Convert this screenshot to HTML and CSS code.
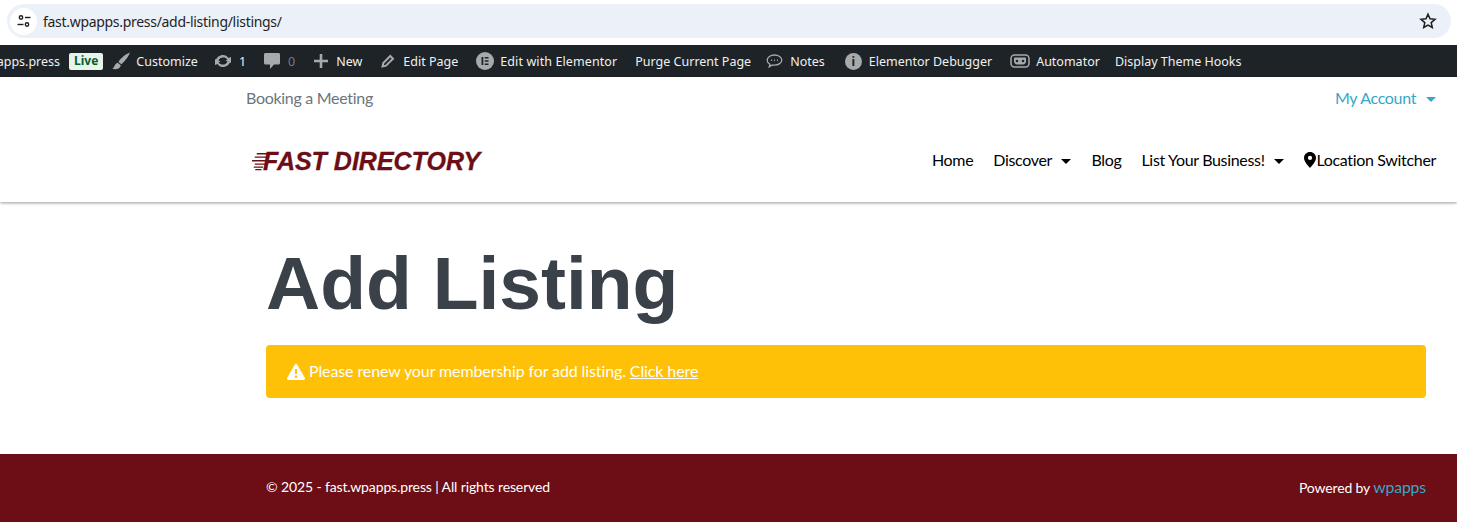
FILE: index.html
```html
<!DOCTYPE html>
<html lang="en">
<head>
  <meta charset="UTF-8">
  <meta name="viewport" content="width=device-width, initial-scale=1.0">
  <title>Add Listing</title>
  <link rel="stylesheet" href="styles.css">
</head>
<body>
  <div class="browser-bar">
    <div class="omnibox">
      <span class="site-icon">
        <svg width="16" height="16" viewBox="0 0 16 16" fill="none" stroke="#1f1f1f" stroke-width="1.4">
          <circle cx="5" cy="4.500" r="1.700"/><path d="M9 4.500h5.500"/>
          <circle cx="11" cy="11.500" r="1.700"/><path d="M1.500 11.500h6"/>
        </svg>
      </span>
      <span class="url">fast.wpapps.press/add-listing/listings/</span>
      <svg class="star" width="18" height="18" viewBox="0 0 18 18" fill="none" stroke="#1f1f1f" stroke-width="1.500">
        <path d="M9 2.200l2 4.600 5 .5-3.800 3.300 1.100 4.900L9 13l-4.300 2.500 1.100-4.900L2 7.300l5-.5z"/>
      </svg>
    </div>
  </div>

  <div class="admin-bar">
    <span class="admin-item site-name">fast.wpapps.press</span>
    <span class="live">Live</span>
    <span class="admin-item customize">
      <svg width="18" height="18" viewBox="0 0 18 18" fill="#a7aaad"><path d="M18 .5C14 2 8.500 6 6.500 10l2.800 2.200C12.500 10 16.500 4.500 18 .5zM5.700 10.800C2.500 11.500 3 15 .3 16.800c3.700 1.200 8 .2 8.500-3.500z"/></svg>
      Customize
    </span>
    <span class="admin-item updates">
      <svg width="18" height="18" viewBox="0 0 18 18" fill="#a7aaad"><path d="M9 3c2.300 0 4.300 1.200 5.400 3.100L17 5v6l-5.500-2.500 1.900-1C12.600 6 10.900 5.400 9 5.400c-2 0-3.800 1.200-4.500 3.100H1.900C2.700 5.300 5.500 3 9 3zM9 15c-2.300 0-4.300-1.200-5.400-3.100L1 13V7l5.500 2.500-1.900 1c.8 1.500 2.500 2.100 4.400 2.100 2 0 3.800-1.200 4.500-3.100h2.600C15.300 12.700 12.500 15 9 15z"/></svg>
      1
    </span>
    <span class="admin-item comments">
      <svg width="16" height="16" viewBox="0 0 16 16" fill="#a7aaad"><path d="M1.500 0h13c.8 0 1.500.7 1.500 1.500v8.500c0 .8-.7 1.500-1.500 1.500H10L6 16v-4.500H1.500C.7 11.500 0 10.800 0 10V1.500C0 .7.700 0 1.500 0z"/></svg>
      <span class="zero">0</span>
    </span>
    <span class="admin-item new-item">
      <svg width="14" height="14" viewBox="0 0 14 14" fill="#a7aaad"><path d="M5.700 0h2.600v5.700H14v2.600H8.300V14H5.700V8.300H0V5.700h5.700z"/></svg>
      New
    </span>
    <span class="admin-item edit-page">
      <svg width="16" height="16" viewBox="0 0 16 16" fill="none" stroke="#a7aaad" stroke-width="2"><path d="M2.500 13.500l.8-3.500 7-7 2.700 2.700-7 7z"/></svg>
      Edit Page
    </span>
    <span class="admin-item elementor">
      <svg width="18" height="18" viewBox="0 0 18 18"><circle cx="9" cy="9" r="9" fill="#a7aaad"/><path fill="#1d2327" d="M5.500 5h1.800v8H5.500zM8.700 5h3.800v1.600H8.700zM8.700 8.200h3.800v1.600H8.700zM8.700 11.400h3.800V13H8.700z"/></svg>
      <span class="elementor-label">Edit with Elementor</span>
    </span>
    <span class="admin-item purge">Purge Current Page</span>
    <span class="admin-item notes">
      <svg width="17" height="16" viewBox="0 0 17 16" fill="none" stroke="#a7aaad" stroke-width="1.300"><path d="M8.500 2C4.500 2 1.200 4.300 1.200 7.200c0 1.700 1.100 3.100 2.700 4l-.6 2.600 3-1.900c.7.100 1.400.2 2.200.2 4 0 7.300-2.200 7.300-4.900S12.500 2 8.500 2z"/><path d="M5 7.300h1M8 7.300h1M11 7.300h1" stroke-width="1.500"/></svg>
      Notes
    </span>
    <span class="admin-item debugger">
      <span class="round-icon">i</span>
      Elementor Debugger
    </span>
    <span class="admin-item automator">
      <svg width="20" height="14" viewBox="0 0 20 14" fill="none"><rect x="1" y="1" width="18" height="12" rx="3.500" stroke="#a7aaad" stroke-width="1.500"/><path d="M5 3.500h10c.6 0 1 .4 1 1v3c0 1.500-1.500 3-3 3H7c-1.500 0-3-1.500-3-3v-3c0-.6.400-1 1-1z" fill="#a7aaad"/><circle cx="7" cy="7" r="1.300" fill="#1d2327"/><circle cx="13" cy="7" r="1.300" fill="#1d2327"/></svg>
      Automator
    </span>
    <span class="admin-item hooks">Display Theme Hooks</span>
  </div>

  <header class="site-header">
    <div class="top-row">
      <a class="booking">Booking a Meeting</a>
      <a class="account">My Account <span class="caret caret-blue"></span></a>
    </div>
    <div class="main-row">
      <div class="logo">
        <svg class="logo-lines" width="20" height="18" viewBox="0 0 20 18" fill="#6d0e16">
          <path d="M5 0h15v1.500H4.500zM3 3.500h12v1.300H2.500zM0 7h14v1.600H0zM3 10.500h10v1.300H2.500zM2 13.500h9v1.300H1.500zM3.500 16h6v1.300H3z"/>
        </svg>
        <span class="logo-text">FAST DIRECTORY</span>
      </div>
      <nav class="main-nav">
        <a>Home</a>
        <a>Discover <span class="caret"></span></a>
        <a>Blog</a>
        <a>List Your Business! <span class="caret"></span></a>
        <a class="location">
          <svg width="12" height="16" viewBox="0 0 12 16"><path fill-rule="evenodd" d="M6 0C2.700 0 0 2.600 0 5.900 0 9.500 4 13.500 6 16c2-2.500 6-6.500 6-10.100C12 2.600 9.300 0 6 0zm0 3.800a2.100 2.100 0 110 4.200 2.100 2.100 0 010-4.200z"/></svg>Location Switcher
        </a>
      </nav>
    </div>
  </header>

  <main class="content">
    <h1>Add Listing</h1>
    <div class="alert">
      <svg width="18" height="16" viewBox="0 0 18 16"><path fill="#fff" fill-rule="evenodd" d="M9 0c.5 0 .9.300 1.200.800l7.600 13c.5.900-.1 2.200-1.200 2.200H1.400C.3 16-.3 14.700.2 13.800l7.600-13C8.100.300 8.500 0 9 0zM8 5v5h2V5zm1 6.500a1.300 1.300 0 100 2.600 1.300 1.300 0 000-2.600z"/></svg>
      <span class="alert-text">Please renew your membership for add listing. <a>Click here</a></span>
    </div>
  </main>

  <footer class="site-footer">
    <span class="copyright">© 2025 - fast.wpapps.press | All rights reserved</span>
    <span class="powered">Powered by <a>wpapps</a></span>
  </footer>
</body>
</html>
```

FILE: styles.css
```css
* {
  box-sizing: border-box;
}
html, body {
  height: 522px;
  overflow: hidden;
}
body {
  margin: 0;
  font-family: "Lato", sans-serif;
  background: #fff;
  color: #000;
}
.browser-bar {
  height: 45px;
  padding: 4px 6px 7px 7px;
  background: #fff;
}
.omnibox {
  height: 34px;
  display: flex;
  align-items: center;
  padding: 0 14px 0 3px;
  border-radius: 17px;
  background: #ebf0f9;
}
.site-icon {
  width: 27px;
  height: 27px;
  display: flex;
  align-items: center;
  justify-content: center;
  border-radius: 50%;
  background: #fff;
}
.url {
  flex: 1;
  margin-left: 6px;
  font-family: "Noto Sans", sans-serif;
  font-size: 14px;
  letter-spacing: -0.3px;
  color: #1f1f1f;
}
.admin-bar {
  height: 32px;
  display: flex;
  align-items: center;
  overflow: hidden;
  background: #1d2327;
  color: #f0f0f1;
  font-family: "Noto Sans", sans-serif;
  font-size: 12.5px;
  white-space: nowrap;
}
.admin-item {
  display: flex;
  align-items: center;
  flex: none;
}
.site-name {
  margin-left: -46px;
}
.live {
  margin-left: 9px;
  padding: 0 5px;
  height: 17px;
  line-height: 16px;
  border-radius: 2px;
  background: #e6f4ea;
  color: #0a5c2b;
  font-size: 12px;
  font-weight: 700;
}
.customize { margin-left: 9px; gap: 6px; }
.updates { margin-left: 16px; gap: 7px; }
.comments { margin-left: 18px; gap: 8px; }
.zero { color: #787c82; }
.new-item { margin-left: 19px; gap: 8px; }
.edit-page { margin-left: 18px; gap: 7px; }
.elementor { margin-left: 18px; gap: 6px; }
.elementor-label { letter-spacing: 0.1px; }
.purge { margin-left: 18px; }
.notes { margin-left: 15px; gap: 7px; }
.debugger { margin-left: 20px; gap: 7px; }
.automator { margin-left: 18px; gap: 6px; }
.hooks { margin-left: 15px; }
.round-icon {
  width: 17px;
  height: 17px;
  display: flex;
  align-items: center;
  justify-content: center;
  border-radius: 50%;
  background: #a7aaad;
  color: #1d2327;
  font-size: 12px;
  font-weight: 700;
}
.site-header {
  height: 125px;
  padding: 0 21px 0 246px;
  background: #fff;
  box-shadow: 0 1px 3px rgba(0, 0, 0, 0.4);
  position: relative;
}
.top-row {
  height: 43px;
  display: flex;
  align-items: flex-start;
  justify-content: space-between;
  padding-top: 11px;
  font-size: 16px;
  letter-spacing: -0.3px;
}
.booking {
  color: #6c757d;
}
.account {
  color: #35a7c9;
}
.caret {
  display: inline-block;
  width: 0;
  height: 0;
  margin-left: 6px;
  vertical-align: 2px;
  border-left: 5px solid transparent;
  border-right: 5px solid transparent;
  border-top: 5px solid #000;
}
.caret-blue {
  border-top-color: #35a7c9;
}
.main-row {
  display: flex;
  align-items: center;
  justify-content: space-between;
  height: 82px;
}
.logo {
  display: flex;
  align-items: center;
  margin-left: 6px;
}
.logo-lines {
  margin-top: 1px;
}
.logo-text {
  margin-left: -9px;
  font-family: "Liberation Sans", sans-serif;
  font-size: 25px;
  font-style: italic;
  font-weight: 700;
  letter-spacing: 0;
  -webkit-text-stroke: 0.3px #6d0e16;
  color: #6d0e16;
}
.main-nav {
  display: flex;
  align-items: center;
  gap: 20px;
  margin-bottom: 4px;
  font-size: 16px;
  letter-spacing: -0.33px;
}
.location {
  display: flex;
  align-items: center;
}
.location svg {
  margin-top: 2px;
}
.content {
  height: 252px;
  padding: 0 31px 0 266px;
}
h1 {
  margin: 0;
  padding-top: 36px;
  font-family: "Liberation Sans", sans-serif;
  font-size: 75px;
  line-height: 90px;
  font-weight: 700;
  color: #3a4149;
}
.alert {
  height: 53px;
  margin-top: 17px;
  display: flex;
  align-items: center;
  gap: 4px;
  padding-left: 21px;
  border-radius: 4px;
  background: #ffc107;
  color: #fff;
  font-size: 16px;
}
.alert-text {
  margin-bottom: 2px;
  letter-spacing: -0.11px;
}
.alert a {
  text-decoration: underline;
}
.site-footer {
  height: 68px;
  display: flex;
  justify-content: space-between;
  align-items: center;
  padding: 0 31px 0 266px;
  background: #6d0e16;
  color: #fff;
  font-size: 14px;
}
.copyright {
  margin-bottom: 4px;
  letter-spacing: -0.125px;
}
.powered {
  margin-bottom: 3px;
  letter-spacing: -0.15px;
}
.powered a {
  color: #35a7c9;
  font-size: 15.8px;
}
```
